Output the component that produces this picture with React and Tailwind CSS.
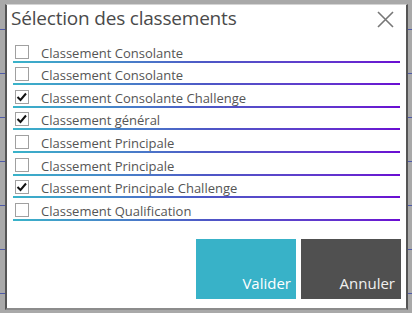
import React, { useState } from 'react';

const items = [
  { label: 'Classement Consolante', checked: false },
  { label: 'Classement Consolante', checked: false },
  { label: 'Classement Consolante Challenge', checked: true },
  { label: 'Classement général', checked: true },
  { label: 'Classement Principale', checked: false },
  { label: 'Classement Principale', checked: false },
  { label: 'Classement Principale Challenge', checked: true },
  { label: 'Classement Qualification', checked: false },
];

const font = { fontFamily: '"Open Sans", "Noto Sans", sans-serif' };

const CheckBox = ({ checked, onToggle }) => (
  <button
    onClick={onToggle}
    className="w-[14px] h-[14px] mb-[2px] border border-[#a0a0a0] bg-white flex items-center justify-center shrink-0"
  >
    {checked && (
      <svg width="12" height="12" viewBox="0 0 12 12">
        <path d="M1.5 6 L4.5 9 L10 2.5" fill="none" stroke="#111" strokeWidth="2" />
      </svg>
    )}
  </button>
);

const App = () => {
  const [rows, setRows] = useState(items);

  const toggle = (i) =>
    setRows(rows.map((r, idx) => (idx === i ? { ...r, checked: !r.checked } : r)));

  return (
    <div className="relative w-[412px] h-[313px] bg-[#a9a9a9] overflow-hidden" style={font}>
      {/* table behind the dialog */}
      <div className="flex flex-col">
        <div className="h-[30px] border-b border-[#4f5aa8]" />
        {[0, 1, 2, 3, 4, 5].map((n) => (
          <div key={n} className="h-[44px] border-b border-[#4f5aa8]" />
        ))}
      </div>

      <div className="absolute left-[5px] top-[4px] w-[403px] h-[306px] bg-white border-l-2 border-r-2 border-l-[#555] border-r-[#555] border-t border-t-[#d4d4d4] border-b-2 border-b-[#8c8c8c] flex flex-col">
        <div className="flex justify-between items-start h-[35px] pl-[4px] pr-[12px]">
          <h2 className="text-[19px] leading-[24px] mt-[1px] text-[#4a4a4a] tracking-[-0.2px]">
            Sélection des classements
          </h2>
          <button className="mt-[6px]">
            <svg width="17" height="17" viewBox="0 0 17 17">
              <path d="M1 1 L16 16 M16 1 L1 16" stroke="#777" strokeWidth="1.6" fill="none" />
            </svg>
          </button>
        </div>

        <div className="flex flex-col px-[6px]">
          {rows.map((r, i) => (
            <div key={i} className="relative h-[22.6px] flex items-end pl-[2px] pb-[2px]">
              <CheckBox checked={r.checked} onToggle={() => toggle(i)} />
              <span className="ml-[12px] text-[13px] text-[#555] leading-[15px]">{r.label}</span>
              <div className="absolute left-0 right-0 bottom-0 h-[2px] bg-linear-to-r from-[#39b3c9] via-[#4d57c6] to-[#6a0ad2]" />
            </div>
          ))}
        </div>

        <div className="flex-1" />

        <div className="flex justify-end gap-[5px] pr-[5px] pb-[9px]">
          <button className="w-[100px] h-[60px] bg-[#38b2c8] text-white text-[15px] leading-none flex items-end justify-end pr-[5px] pb-[8px]">
            Valider
          </button>
          <button className="w-[100px] h-[60px] bg-[#505050] text-[#f0f0f0] text-[15px] leading-none flex items-end justify-end pr-[6px] pb-[8px]">
            Annuler
          </button>
        </div>
      </div>
    </div>
  );
};

export default App;
